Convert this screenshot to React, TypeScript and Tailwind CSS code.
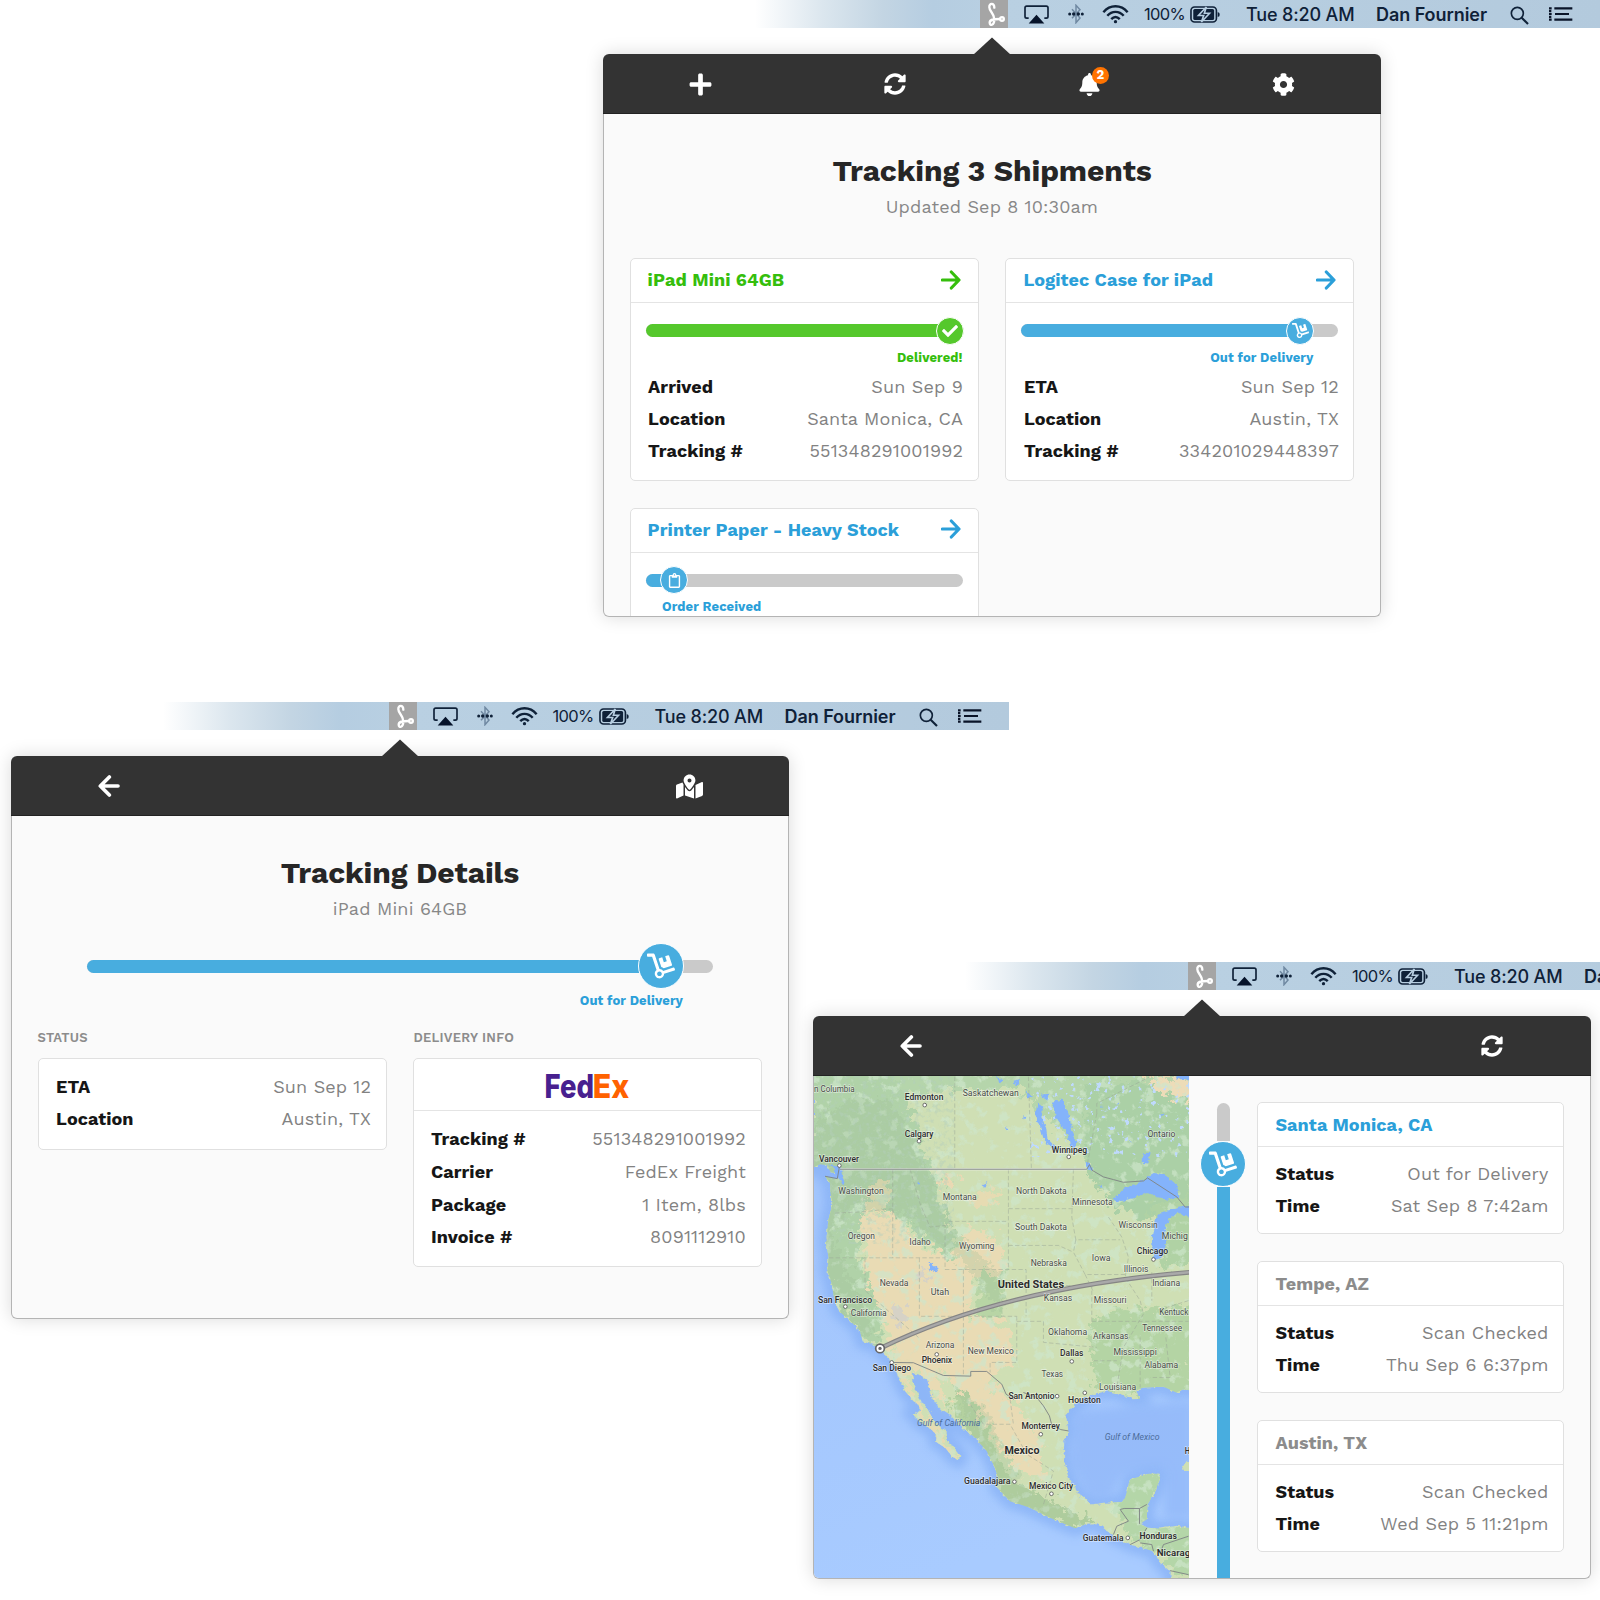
import React from "react";
import { FaBell, FaCheck, FaCog, FaDolly, FaMapMarkedAlt, FaPlus, FaRegClipboard, FaSyncAlt } from "react-icons/fa";

type Row = { label: string; value: string };

function RouteMark() {
  return (
    <svg viewBox="0 0 84 84" className="h-7 w-7 shrink-0 bg-[#a5a5a5]" fill="none" stroke="#fff" strokeWidth="7" strokeLinecap="round">
      <path d="M43 23 C43 7 27 9 28 22 C28 35 43 40 43 58 C43 78 29 78 29 68 C29 59 38 57 60 57" />
      <circle cx="66" cy="57" r="5.5" />
    </svg>
  );
}

function MenuBar({ inset }: { inset: string }) {
  return (
    <div className={`flex h-7 items-center bg-[linear-gradient(90deg,#fff_152px,#dbe6ee_220px,#c3d5e3_280px,#b5cde1_330px,#b9d0e2_400px,#b3cadd_998px)] font-['Inter',sans-serif] text-[#0f2138] ${inset}`}>
      <RouteMark />
      <svg viewBox="0 0 75 56" className="ml-4 h-[19px] w-[25px] shrink-0">
        <path d="M14 39 H8 Q3 39 3 34 V8 Q3 3 8 3 H67 Q72 3 72 8 V34 Q72 39 67 39 H61" fill="none" stroke="currentColor" strokeWidth="5" />
        <path d="M37.500 29 L61 55 H14 Z" fill="#06132a" />
      </svg>
      <svg viewBox="0 0 48 60" className="ml-[19px] h-5 w-4 shrink-0">
        <path d="M12 16 L36 42 L24 56 V4 L36 17 L12 43" fill="none" stroke="#7089a2" strokeWidth="4.500" />
        <circle cx="5" cy="30" r="4.500" fill="currentColor" />
        <circle cx="17" cy="30" r="5" fill="currentColor" />
        <circle cx="31" cy="30" r="5" fill="currentColor" />
        <circle cx="43" cy="30" r="4.500" fill="currentColor" />
      </svg>
      <svg viewBox="0 0 80 58" className="ml-[18px] h-[19px] w-[27px] shrink-0" fill="none" stroke="currentColor" strokeWidth="7.500">
        <path d="M3 22 C24 -2 56 -2 77 22" />
        <path d="M15 33 C29 17 51 17 65 33" />
        <path d="M27 43 C35 35 45 35 53 43" />
        <circle cx="40" cy="51" r="5" fill="currentColor" stroke="none" />
      </svg>
      <span className="ml-[15px] w-[46px] text-[16.500px] tracking-[-0.650px]">100%</span>
      <svg viewBox="0 0 92 52" className="h-[17px] w-[30px] shrink-0">
        <rect x="3" y="3" width="78" height="46" rx="11" fill="none" stroke="currentColor" strokeWidth="5" />
        <rect x="10" y="9" width="64" height="34" rx="5" fill="currentColor" />
        <path d="M50 3 L26 29 H42 L35 49 L60 22 H44 Z" fill="currentColor" stroke="#b7cee1" strokeWidth="5" />
        <path d="M85 18 Q92 20 91 26 Q92 32 85 34 Z" fill="currentColor" />
      </svg>
      <span className="ml-[26px] w-[130px] text-[18px] font-medium tracking-[-0.150px] whitespace-nowrap">Tue 8:20 AM</span>
      <span className="w-[134px] text-[18px] font-semibold tracking-[-0.060px] whitespace-nowrap">Dan Fournier</span>
      <svg viewBox="0 0 57 57" className="mt-0.5 h-[19px] w-[19px] shrink-0" fill="none" stroke="currentColor" strokeWidth="5">
        <circle cx="22" cy="22" r="18" />
        <path d="M35 35 L54 54" strokeWidth="6.500" />
      </svg>
      <svg viewBox="0 0 72 42" className="ml-5 h-[14px] w-6 shrink-0" stroke="#0a1428" strokeWidth="6.500">
        <path d="M0 4 H8 M16 4 H70 M0 12.500 H7 M0 21 H8 M18 21 H60 M0 29.500 H7 M0 38 H8 M16 38 H70" />
      </svg>
    </div>
  );
}

function Back() {
  return (
    <svg viewBox="0 0 66 66" className="h-[22px] w-[22px]" fill="none" stroke="#fff" strokeWidth="11" strokeLinecap="round" strokeLinejoin="round">
      <path d="M34 6 L7 33 L34 60 M9 33 H60" />
    </svg>
  );
}

function Forward() {
  return (
    <svg viewBox="0 0 60 60" className="h-5 w-5" fill="none" stroke="currentColor" strokeWidth="9.500" strokeLinecap="round" strokeLinejoin="round">
      <path d="M31 6 L54 30 L31 54 M4 30 H52" />
    </svg>
  );
}

function Scene({ className, inset, header, children }: { className: string; inset: string; header: React.ReactNode; children: React.ReactNode }) {
  return (
    <section className={`absolute w-[998px] ${className}`}>
      <MenuBar inset={inset} />
      <div className="relative mt-[26px] flex h-[563px] w-[778px] flex-col rounded-[6px] shadow-[0_0_18px_rgba(0,0,0,0.15)]">
        <svg viewBox="0 0 38 18" className="absolute -top-[17px] left-[370px] h-[18px] w-[38px]">
          <path d="M19 0.500 L38 18 H0 Z" fill="#333" />
        </svg>
        <header className="flex h-[60px] shrink-0 items-center rounded-t-[6px] border-b border-[#222] bg-[#333] pt-px text-white">{header}</header>
        <div className="flex-1 overflow-hidden rounded-b-[6px] border-x border-b border-[#b4b4b4] bg-[#fafafa]">{children}</div>
      </div>
    </section>
  );
}

function Heading({ title, sub }: { title: string; sub: string }) {
  return (
    <div className="flex flex-col items-center pt-[37px]">
      <h1 className="text-[30px] leading-10 font-bold tracking-[-0.100px] text-[#262626]">{title}</h1>
      <p className="mt-[4px] text-[18px] leading-6 tracking-[0.150px] text-[#878787]">{sub}</p>
    </div>
  );
}

function Rows({ rows, className = "", pitch = "h-[32.300px]", inset = "pr-[14.500px] pl-[17.500px]" }: { rows: Row[]; className?: string; pitch?: string; inset?: string }) {
  return (
    <dl className={`${inset} ${className}`}>
      {rows.map((r) => (
        <div key={r.label} className={`flex items-center justify-between whitespace-nowrap ${pitch}`}>
          <dt className="text-[18px] font-bold tracking-[0.080px] text-[#161616]">{r.label}</dt>
          <dd className="text-[18px] tracking-[0.160px] text-[#828282]">{r.value}</dd>
        </div>
      ))}
    </dl>
  );
}

const box = "rounded-[5px] border border-[#e0e0e0] bg-white";

function Shipment({ title, color, fill, labelPad, pct, icon, status, rows }: { title: string; color: string; fill: string; labelPad: string; pct: string; icon: React.ReactNode; status: string; rows: Row[] }) {
  return (
    <article className={`h-[223px] ${box}`}>
      <div className={`flex h-[44px] items-center justify-between border-b border-[#e4e4e4] pr-[17px] pb-[2px] pl-[17px] ${color}`}>
        <h2 className="text-[18px] font-bold tracking-[0.100px]">{title}</h2>
        <Forward />
      </div>
      <div className="mx-[15px] mt-[14px] flex h-[27px] items-center">
        <div className="flex h-[13px] flex-1 items-center rounded-full bg-[#cacaca]">
          <div className={`h-full rounded-l-full ${fill} ${pct}`} />
          <div className={`-ml-[14px] flex h-[28px] w-[28px] shrink-0 items-center justify-center rounded-full border-[1.500px] border-white text-white ${fill}`}>{icon}</div>
        </div>
      </div>
      <p className={`mt-[2px] flex h-[23px] items-center text-[13px] font-bold tracking-[0.100px] whitespace-nowrap ${color} ${labelPad}`}>{status}</p>
      <Rows rows={rows} className="mt-[1px]" />
    </article>
  );
}

const green = "text-[#35be0c]";
const blue = "text-[#2b9fd9]";

/* Map labels: x, baseline y, width, text, kind (c = city, b = country, m = small country, w = water) */
type Label = [number, number, number, string, string?];
const labels: Label[] = [
  [12, 67, 122, "n Columbia"], [284, 90, 116, "Edmonton", "c"], [458, 78, 168, "Saskatchewan"], [284, 200, 86, "Calgary", "c"],
  [1012, 202, 84, "Ontario"], [725, 248, 106, "Winnipeg", "c"], [27, 274, 120, "Vancouver", "c"], [85, 372, 136, "Washington"],
  [398, 388, 102, "Montana"], [618, 370, 152, "North Dakota"], [786, 404, 122, "Minnesota"], [615, 478, 156, "South Dakota"],
  [925, 472, 118, "Wisconsin"], [1055, 505, 78, "Michig"], [113, 505, 82, "Oregon"], [298, 524, 64, "Idaho"], [447, 535, 106, "Wyoming"],
  [980, 552, 94, "Chicago", "c"], [845, 571, 56, "Iowa"], [662, 588, 108, "Nebraska"], [941, 605, 74, "Illinois"], [209, 647, 86, "Nevada"],
  [362, 672, 55, "Utah"], [563, 651, 199, "United States", "b"], [1026, 647, 84, "Indiana"], [24, 696, 162, "San Francisco", "c"], [701, 691, 85, "Kansas"],
  [851, 698, 98, "Missouri"], [122, 735, 108, "California"], [1047, 733, 88, "Kentuck"], [996, 782, 120, "Tennessee"], [714, 793, 117, "Oklahoma"],
  [849, 806, 106, "Arkansas"], [347, 832, 86, "Arizona"], [335, 878, 91, "Phoenix", "c"], [473, 851, 138, "New Mexico"], [750, 857, 70, "Dallas", "c"],
  [910, 852, 130, "Mississippi"], [1003, 892, 101, "Alabama"], [188, 902, 115, "San Diego", "c"], [694, 920, 65, "Texas"], [867, 957, 111, "Louisiana"],
  [595, 983, 138, "San Antonio", "c"], [774, 995, 98, "Houston", "c"], [634, 1075, 115, "Monterrey", "c"], [321, 1065, 190, "Gulf of California", "w"],
  [884, 1107, 164, "Gulf of Mexico", "w"], [583, 1149, 105, "Mexico", "b"], [1124, 1149, 16, "H", "c"], [462, 1240, 139, "Guadalajara", "c"],
  [657, 1254, 132, "Mexico City", "c"], [818, 1408, 122, "Guatemala", "c"], [988, 1404, 112, "Honduras", "m"], [1040, 1455, 100, "Nicarag", "m"],
];
const cities: [number, number][] = [
  [344, 105], [327, 213], [776, 260], [88, 286], [1030, 567], [106, 708], [380, 851], [785, 872], [245, 875], [741, 976], [824, 966], [692, 1090], [613, 1232], [724, 1268], [953, 1400],
];

const land =
  "M12 10 V290 L30 282 L50 284 L62 305 L88 312 L92 325 L75 326 L45 318 L60 338 L62 370 L67 400 L55 450 L48 520 L56 560 L52 600 L65 640 L72 680 L85 720 L120 750 L150 780 L157 812 L190 822 L208 836 L232 860 L255 890 L270 930 L288 965 L322 1000 L334 1018 L308 1030 L330 1055 L360 1072 L380 1092 L378 1112 L405 1130 L428 1158 L444 1166 L451 1155 L430 1125 L415 1120 L405 1080 L372 1050 L350 1010 L330 985 L312 940 L306 908 L330 912 L352 926 L360 968 L385 1008 L418 1030 L432 1045 L465 1080 L490 1095 L530 1140 L555 1190 L562 1215 L560 1248 L600 1290 L660 1310 L720 1340 L795 1371 L830 1358 L862 1356 L910 1395 L960 1420 L1030 1440 L1050 1475 L1080 1500 L1085 1530 H1145 V1372 L1100 1364 L1050 1372 L1012 1370 L990 1358 L1010 1345 L1012 1300 L1034 1265 L1050 1220 L1045 1208 L1015 1208 L960 1225 L945 1280 L935 1293 L880 1295 L845 1300 L805 1268 L775 1220 L762 1170 L762 1110 L775 1080 L768 1035 L790 1005 L820 985 L850 970 L890 960 L935 970 L970 985 L990 984 L975 960 L1000 950 L1060 948 L1098 965 L1120 955 L1145 960 V10 Z";

function TripMap() {
  return (
    <svg viewBox="12 18 1123 1502" preserveAspectRatio="none" className="block h-full w-full" fontFamily="Roboto, sans-serif">
      <defs>
        <linearGradient id="sea" x1="0" y1="0" x2="0.3" y2="1">
          <stop offset="0.3" stopColor="#a3c6fd" />
          <stop offset="1" stopColor="#a8cbff" />
        </linearGradient>
        <clipPath id="landclip"><path d={land} /></clipPath>
        <filter id="ragged" x="-5%" y="-5%" width="110%" height="110%">
          <feTurbulence type="fractalNoise" baseFrequency="0.045" numOctaves="4" seed="4" result="n" />
          <feDisplacementMap in="SourceGraphic" in2="n" scale="75" xChannelSelector="R" yChannelSelector="G" />
        </filter>
        <filter id="coast" x="-5%" y="-5%" width="110%" height="110%">
          <feTurbulence type="fractalNoise" baseFrequency="0.08" numOctaves="2" seed="9" result="n" />
          <feDisplacementMap in="SourceGraphic" in2="n" scale="16" xChannelSelector="R" yChannelSelector="G" />
        </filter>
        <filter id="woods" x="0" y="0" width="100%" height="100%">
          <feTurbulence type="fractalNoise" baseFrequency="0.03" numOctaves="5" seed="12" />
          <feColorMatrix values="0 0 0 0 0.62  0 0 0 0 0.79  0 0 0 0 0.6  7 0 0 0 -3.9" />
        </filter>
        <filter id="relief" x="0" y="0" width="100%" height="100%">
          <feTurbulence type="fractalNoise" baseFrequency="0.07" numOctaves="3" seed="5" />
          <feColorMatrix values="0 0 0 0 0.45  0 0 0 0 0.62  0 0 0 0 0.5  0 5 0 0 -2.6" />
        </filter>
        <filter id="ponds" x="0" y="0" width="100%" height="100%">
          <feTurbulence type="fractalNoise" baseFrequency="0.055" numOctaves="3" seed="21" />
          <feColorMatrix values="0 0 0 0 0.52  0 0 0 0 0.7  0 0 0 0 0.98  0 0 14 0 -9.2" />
        </filter>
        <filter id="glow"><feGaussianBlur stdDeviation="14" /></filter>
      </defs>
      <rect x="0" y="0" width="1150" height="1530" fill="url(#sea)" />
      <path d={land} fill="none" stroke="#86b0f5" strokeWidth="46" opacity="0.75" filter="url(#glow)" />
      <path d="M790 1020 L1000 1000 L1150 990 V1340 L1060 1340 L1060 1200 L940 1210 L900 1280 L840 1280 L780 1180 Z" fill="#8fb6f8" opacity="0.7" filter="url(#glow)" />
      <g filter="url(#coast)">
        <path d={land} fill="#cfdfb4" />
        <path d="M1115 1180 L1150 1165 V1200 L1120 1200 Z" fill="#cfdfb4" />
      </g>
      <g clipPath="url(#landclip)">
        <g filter="url(#ragged)">
          <path d="M0 0 H270 L300 120 L340 240 L380 330 L410 450 L440 500 L420 580 L330 500 L250 430 L160 420 L140 530 L170 620 L220 740 L200 830 L130 780 L60 660 L0 300 Z" fill="#b0d2a8" />
          <path d="M240 0 H1150 V90 L960 60 L900 120 L830 270 L770 200 L690 130 L640 60 L400 60 L280 80 Z" fill="#b5d5ab" />
          <path d="M820 40 H1150 V420 L1000 450 L900 400 L830 300 Z" fill="#abd0a6" />
          <path d="M840 760 L900 720 L1150 700 V980 L1000 970 L850 950 Z" fill="#b4d4a4" />
          <path d="M1020 400 L1150 380 V580 L1060 600 Z" fill="#b0d2a4" />
          <path d="M510 600 L590 590 L570 740 L500 750 Z" fill="#b8d5a5" />
          <path d="M450 950 L500 1010 L600 1220 L720 1290 L850 1350 L800 1380 L600 1310 L550 1230 L480 1090 L420 1000 Z" fill="#b4d1a0" />
          <path d="M900 1290 L960 1210 L1060 1190 L1030 1350 L1150 1370 V1540 L1060 1460 L960 1400 Z" fill="#b4d6a8" />
          <path d="M150 440 L250 430 L330 530 L430 560 L470 470 L560 500 L590 600 L490 620 L480 740 L600 760 L620 860 L540 940 L620 1000 L690 1100 L700 1220 L620 1200 L540 1080 L480 980 L380 900 L420 1030 L350 930 L260 870 L230 780 L180 640 Z" fill="#e9dbb4" />
          <path d="M230 840 L300 870 L300 950 L350 1030 L450 1160 L420 1160 L330 1040 L250 900 Z" fill="#e6dbb2" />
          <path d="M380 310 L440 310 L430 350 L390 350 Z" fill="#ebd9b3" />
          <path d="M480 380 L570 350 L560 400 L500 410 Z" fill="#e6dbb2" />
          <path d="M180 340 L240 330 L230 420 L160 430 Z" fill="#e6dbb2" />
          <path d="M990 20 L1150 20 V90 L1060 70 Z" fill="#eddcb8" />
          <path d="M240 700 L290 710 L270 770 Z M335 590 L360 620 L350 640 L335 630 Z" fill="#d6d2c6" />
        </g>
        <rect x="0" y="0" width="1150" height="1530" filter="url(#woods)" opacity="0.7" />
        <path d="M0 170 L130 80 L250 100 L360 330 L430 480 L560 600 L590 740 L440 560 L260 420 L140 400 L60 480 L200 800 L130 780 L0 500 Z M430 940 L520 1010 L640 1250 L850 1350 L800 1380 L560 1290 Z" fill="#9fbf96" opacity="0.28" filter="url(#ragged)" />
        <rect x="0" y="0" width="430" height="520" filter="url(#relief)" opacity="0.45" />
        <rect x="660" y="0" width="490" height="260" filter="url(#ponds)" />
      </g>
      <g fill="#84b3fb" filter="url(#coast)">
        <path d="M725 95 L755 88 L775 130 L785 175 L798 210 L795 235 L780 225 L770 185 L740 150 Z" />
        <path d="M682 100 L700 110 L690 140 L708 170 L712 205 L740 235 L728 240 L700 205 L690 170 L676 140 Z" />
        <path d="M690 75 L715 70 L712 92 Z M560 22 L580 28 L570 40 Z M610 35 L632 30 L622 50 Z M650 60 L662 80 L652 82 Z M998 250 L1018 248 L1015 280 L998 278 Z M1095 15 H1140 V28 H1100 Z" />
        <path d="M910 388 L940 355 L990 335 L1030 308 L1065 312 L1100 345 L1108 378 L1075 388 L1040 380 L1010 365 L975 382 L935 392 Z" />
        <path d="M1030 570 L1025 500 L1035 445 L1055 425 L1095 415 L1140 405 V440 L1100 425 L1075 450 L1062 480 L1068 520 L1058 560 Z" />
        <path d="M830 275 L848 290 L842 305 L832 295 Z M355 575 L378 590 L382 608 L362 600 Z M515 345 L535 335 L525 352 Z M322 335 L330 338 L328 350 Z M585 175 L592 170 L590 180 Z M60 285 L90 290 L105 345 L92 335 L80 310 Z M640 135 L648 142 L640 148 Z M868 345 L880 350 L872 352 Z M870 105 L880 108 L872 114 Z M1050 130 L1060 128 L1056 136 Z M920 95 L928 100 L920 104 Z M955 215 L966 212 L962 220 Z" />
      </g>
      <g fill="none" stroke="#9aa596" strokeWidth="2" strokeDasharray="13 7" opacity="0.75">
        <path d="M434 20 V297 M655 20 L664 297 M860 130 V100 L1020 20 M860 130 L832 280 M248 297 V420 L262 450 M75 428 L150 425 L250 415 M57 562 H405 M165 562 V660 L325 800 M248 420 V562 M300 297 L330 400 L360 470 L405 465 V597 M405 470 L415 453 H595 M595 297 V597 M595 415 H790 M595 525 H745 L790 545 M405 597 H648 V737 M460 597 V912 M328 562 V737 H620 M648 645 H825 M620 737 V875 H540 V905 M700 752 V815 L860 830 M620 752 H700 M845 640 V752 M790 297 L785 440 L797 508 H930 M797 508 L790 545 L825 612 H950 M825 612 L848 660 M845 752 H985 M850 870 H920 M895 440 L935 500 L955 560 L945 620 L990 690 L1000 730 L940 830 L920 950 M1025 605 V690 M1135 690 L1040 720 M985 752 H1135 M990 800 V950 M1067 800 L1080 920 H1020" />
        <path d="M480 1000 L520 1060 L600 1060 L650 1150 L730 1200 L700 1300 M600 985 L610 1060" />
      </g>
      <path d="M90 297 H830" fill="none" stroke="#f2f3ee" strokeWidth="8" opacity="0.6" />
      <path
        d="M90 297 H830 L838 283 L846 300 L880 320 L910 328 L940 336 L1000 332 L1012 323 L1100 380 L1125 410 H1140 M88 290 L82 325 L45 318 M240 875 L310 876 L400 914 L482 916 V902 H530 L575 940 L588 970 L612 986 M640 965 L680 980 L700 1005 L718 1035 L725 1062 L752 1076 L775 1080 M910 1390 L920 1365 L955 1350 L930 1315 L942 1312 H988 V1358 M988 1312 L1010 1300 M960 1420 L990 1405 L1010 1370 M990 1415 L1025 1420 L1030 1440 M1050 1445 L1060 1420 L1135 1395 M1080 1498 L1135 1510"
        fill="none"
        stroke="#7f8585"
        strokeWidth="2.800"
      />
      <path d="M210 833 C420 730 720 640 1140 605" fill="none" stroke="#858585" strokeWidth="14" />
      <path d="M210 833 C420 730 720 640 1140 605" fill="none" stroke="#a9a9a9" strokeWidth="7" />
      <circle cx="210" cy="833" r="13" fill="#fff" stroke="#666" strokeWidth="5" />
      <circle cx="210" cy="833" r="5" fill="#666" />
      {cities.map(([x, y]) => (
        <circle key={`${x}-${y}`} cx={x} cy={y} r="5.500" fill="#fff" stroke="#555" strokeWidth="2.500" />
      ))}
      {labels.map(([x, y, w, t, k]) => (
        <text
          key={t}
          x={x}
          y={y}
          textLength={w}
          lengthAdjust="spacingAndGlyphs"
          fontSize={k === "b" ? 31 : 27}
          fontWeight={k === "b" ? 700 : k === "m" ? 600 : k === "c" ? 500 : 400}
          fontStyle={k === "w" ? "italic" : "normal"}
          fill={k === "w" ? "#4d6d9a" : k ? "#2c2c2c" : "#484c48"}
          stroke={k === "w" ? "none" : "#fff"}
          strokeOpacity="0.5"
          strokeWidth="4"
          paintOrder="stroke"
        >
          {t}
        </text>
      ))}
    </svg>
  );
}

const stops = [
  { place: "Santa Monica, CA", color: blue, status: "Out for Delivery", time: "Sat Sep 8 7:42am" },
  { place: "Tempe, AZ", color: "text-[#8c8c8c]", status: "Scan Checked", time: "Thu Sep 6 6:37pm" },
  { place: "Austin, TX", color: "text-[#8c8c8c]", status: "Scan Checked", time: "Wed Sep 5 11:21pm" },
];

export default function App() {
  return (
    <main className="relative h-[1600px] w-[1600px] overflow-hidden bg-white font-['Work_Sans','Inter',sans-serif]">
      <Scene
        className="top-0 left-[603px]"
        inset="pl-[377px]"
        header={
          <>
            <span className="flex flex-1 justify-center"><FaPlus size={25} /></span>
            <span className="flex flex-1 justify-center"><FaSyncAlt size={22} /></span>
            <span className="flex flex-1 justify-center">
              <span className="relative">
                <FaBell size={23} />
                <span className="absolute -top-[6px] left-[14px] flex h-[17px] w-[17px] items-center justify-center rounded-full bg-[#ff7300] text-[13px] font-bold">2</span>
              </span>
            </span>
            <span className="flex flex-1 justify-center"><FaCog size={23} /></span>
          </>
        }
      >
        <Heading title="Tracking 3 Shipments" sub="Updated Sep 8 10:30am" />
        <div className="mt-[39px] grid grid-cols-2 gap-x-[26.800px] gap-y-[26.500px] px-[25.600px]">
          <Shipment title="iPad Mini 64GB" color={green} fill="bg-[#55c82c]" pct="w-[304.500px]" labelPad="justify-end pr-[15px]" icon={<FaCheck size={16} />} status="Delivered!"
            rows={[{ label: "Arrived", value: "Sun Sep 9" }, { label: "Location", value: "Santa Monica, CA" }, { label: "Tracking #", value: "551348291001992" }]} />
          <Shipment title="Logitec Case for iPad" color={blue} fill="bg-[#48addf]" pct="w-[279px]" labelPad="justify-end pr-[40px]" icon={<FaDolly size={17} />} status="Out for Delivery"
            rows={[{ label: "ETA", value: "Sun Sep 12" }, { label: "Location", value: "Austin, TX" }, { label: "Tracking #", value: "334201029448397" }]} />
          <Shipment title="Printer Paper - Heavy Stock" color={blue} fill="bg-[#48addf]" pct="w-[28.500px]" labelPad="pl-[31.500px]" icon={<FaRegClipboard size={15} />} status="Order Received" rows={[]} />
        </div>
      </Scene>

      <Scene
        className="top-[702px] left-[11px]"
        inset="pl-[377.500px]"
        header={
          <>
            <span className="flex w-[195px] justify-center"><Back /></span>
            <span className="flex-1" />
            <span className="flex w-[200px] justify-center"><FaMapMarkedAlt size={27} /></span>
          </>
        }
      >
        <Heading title="Tracking Details" sub="iPad Mini 64GB" />
        <div className="mx-[75px] mt-[22px] flex h-[46px] items-center">
          <div className="flex h-[13px] flex-1 items-center rounded-full bg-[#cacaca]">
            <div className="h-full w-[574px] rounded-l-full bg-[#48addf]" />
            <div className="-ml-[23px] flex h-[46px] w-[46px] shrink-0 items-center justify-center rounded-full border-[1.500px] border-white bg-[#48addf] text-white"><FaDolly size={28} /></div>
          </div>
        </div>
        <p className={`mt-[2px] flex h-[20px] items-center justify-end pr-[105px] text-[13px] font-bold tracking-[0.100px] ${blue}`}>Out for Delivery</p>
        <div className="mt-[16px] grid grid-cols-2 items-start gap-[26.800px] px-[25.600px]">
          <div>
            <h3 className="h-[31px] text-[13px] leading-[21px] font-semibold tracking-[0.250px] text-[#8c8c8c]">STATUS</h3>
            <div className={`h-[92px] pt-[11px] ${box}`}>
              <Rows rows={[{ label: "ETA", value: "Sun Sep 12" }, { label: "Location", value: "Austin, TX" }]} />
            </div>
          </div>
          <div>
            <h3 className="h-[31px] text-[13px] leading-[21px] font-semibold tracking-[0.250px] text-[#8c8c8c]">DELIVERY INFO</h3>
            <div className={`h-[209px] ${box}`}>
              <div className="flex h-[52px] items-center justify-center border-b border-[#e4e4e4]">
                <svg viewBox="0 0 83 26" className="h-[26px] w-[83px] overflow-visible font-['Inter',sans-serif] text-[33px] font-extrabold">
                  <text x="-1.500" y="25.500" textLength="49.500" lengthAdjust="spacingAndGlyphs" fill="#48208f">Fed</text>
                  <text x="46.800" y="25.500" textLength="36.500" lengthAdjust="spacingAndGlyphs" fill="#ff6200">Ex</text>
                </svg>
              </div>
              <Rows pitch="h-[32.700px]" inset="pr-[15.500px] pl-[16.500px]" className="pt-[11.500px]" rows={[{ label: "Tracking #", value: "551348291001992" }, { label: "Carrier", value: "FedEx Freight" }, { label: "Package", value: "1 Item, 8lbs" }, { label: "Invoice #", value: "8091112910" }]} />
            </div>
          </div>
        </div>
      </Scene>

      <Scene
        className="top-[962px] left-[813px]"
        inset="pl-[375px]"
        header={
          <>
            <span className="flex w-[195px] justify-center"><Back /></span>
            <span className="flex-1" />
            <span className="flex w-[199px] justify-center"><FaSyncAlt size={22} /></span>
          </>
        }
      >
        <div className="flex h-full">
          <div className="h-full w-[374.500px] shrink-0 overflow-hidden"><TripMap /></div>
          <div className="flex w-[68.500px] shrink-0 flex-col items-center pt-[27px] pl-px">
            <div className="h-[38px] w-[13px] rounded-t-full bg-[#cacaca]" />
            <div className="flex h-[46px] w-[46px] shrink-0 items-center justify-center rounded-full border-[1.500px] border-white bg-[#48addf] text-white"><FaDolly size={28} /></div>
            <div className="w-[13px] flex-1 bg-[#48addf]" />
          </div>
          <div className="flex w-[307px] flex-col gap-[27px] pt-[26px]">
            {stops.map((s) => (
              <article key={s.place} className={`h-[132px] shrink-0 ${box}`}>
                <h2 className={`flex h-[44px] items-center border-b border-[#e4e4e4] pb-px pl-[17.500px] text-[18px] font-bold tracking-[0.080px] ${s.color}`}>{s.place}</h2>
                <Rows className="pt-[10.500px]" rows={[{ label: "Status", value: s.status }, { label: "Time", value: s.time }]} />
              </article>
            ))}
          </div>
        </div>
      </Scene>
    </main>
  );
}
